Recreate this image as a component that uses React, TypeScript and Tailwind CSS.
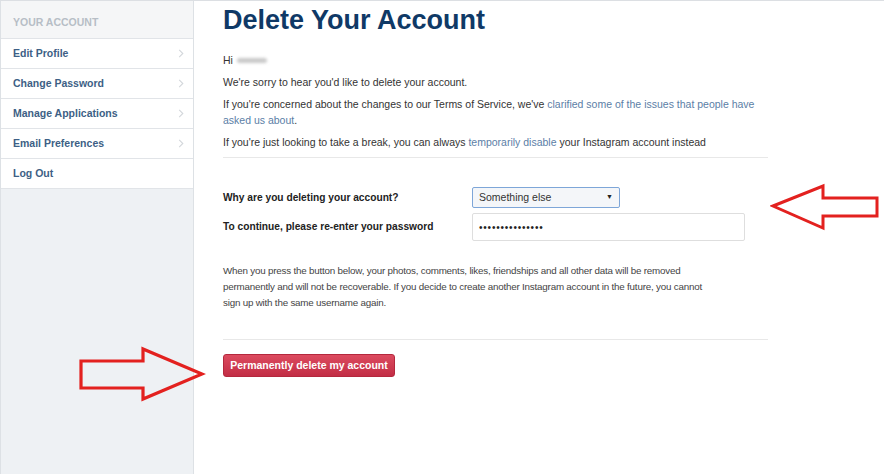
const menu = ["Edit Profile", "Change Password", "Manage Applications", "Email Preferences", "Log Out"];

function Chevron() {
  return (
    <svg viewBox="0 0 6 10" className="h-[9px] w-[6px]" fill="none" aria-hidden="true">
      <path d="M1 1l4 4-4 4" stroke="#d3d7db" strokeWidth="1.2" />
    </svg>
  );
}

function Sidebar() {
  return (
    <aside className="w-[194px] shrink-0 border-l border-r border-[#dde1e5] bg-[#eef1f4]">
      <div className="flex h-[38px] items-center border-b border-[#e1e4e8] bg-[#f5f6f7] px-3 pt-[6px] text-[10.5px] font-bold uppercase text-[#b7bec6]">
        Your Account
      </div>
      {menu.map((item, index) => (
        <div
          key={item}
          className="flex h-[30px] items-center justify-between border-b border-[#e1e4e8] bg-white pl-3 pr-[9px] text-[10.5px] font-bold text-[#3d5f85]"
        >
          <span>{item}</span>
          {index < menu.length - 1 ? <Chevron /> : null}
        </div>
      ))}
    </aside>
  );
}

function LeftArrow() {
  // points left, sits right of the form
  return (
    <svg className="absolute left-[770px] top-[182px]" width="112" height="48" viewBox="0 0 112 48" fill="none">
      <path d="M3 23 L53 3 L53 15 L107 15 L107 33 L53 33 L53 45 Z" stroke="#e3211f" strokeWidth="3" strokeLinejoin="miter" />
    </svg>
  );
}

function RightArrow() {
  // points right, towards the button
  return (
    <svg className="absolute left-[78px] top-[345px]" width="128" height="57" viewBox="0 0 128 57" fill="none">
      <path d="M3 15 L65 15 L65 3 L124 28 L65 53 L65 42 L3 42 Z" stroke="#e3211f" strokeWidth="3.2" strokeLinejoin="miter" />
    </svg>
  );
}

export default function App() {
  return (
    <div
      className="relative flex h-[474px] w-[884px] overflow-hidden border-t border-[#dcdfe3] bg-white"
      style={{ fontFamily: '"Liberation Sans", Arial, sans-serif' }}
    >
      <Sidebar />
      <main className="w-[574px] pl-[29px] text-[10px] text-[#333]">
        <h1 className="mt-[3px] text-[27px] font-bold leading-[32px] text-[#0f3966]">Delete Your Account</h1>

        <div className="mt-[16px] text-[10.5px] leading-4">
          <p className="mb-[6px] flex items-center gap-[4px]">
            Hi
            <span className="inline-block h-[5px] w-[30px] rounded-full bg-[#c9c9c9] blur-[1.5px]" />
          </p>
          <p className="mb-[6px]">We're sorry to hear you'd like to delete your account.</p>
          <p className="mb-[6px]">
            If you're concerned about the changes to our Terms of Service, we've{" "}
            <span className="text-[#5b7ea6]">
              clarified some of the issues that people have
              <br />
              asked us about
            </span>
            .
          </p>
          <p>
            If you're just looking to take a break, you can always{" "}
            <span className="text-[#5b7ea6]">temporarily disable</span> your Instagram account instead
          </p>
        </div>

        <div className="mt-[7px] border-t border-[#e8e8e8]" />

        <div className="mt-[29px] flex flex-col gap-[5px]">
          <div className="flex items-center">
            <label className="w-[249px] text-[10.2px] font-bold text-[#222]">Why are you deleting your account?</label>
            <div className="flex h-[21px] w-[148px] items-center justify-between rounded-[2px] border border-[#7ea6d8] bg-[#f4f6f9] pl-[6px] pr-[6px] text-[10.5px] text-[#333]">
              <span>Something else</span>
              <span className="text-[7px] text-[#222]">▼</span>
            </div>
          </div>
          <div className="flex items-center">
            <label className="w-[249px] text-[10.2px] font-bold text-[#222]">To continue, please re-enter your password</label>
            <div className="flex h-[28px] w-[273px] items-center rounded-[2px] border border-[#dedede] bg-white pl-[6px] text-[10px] tracking-[0.8px] text-[#222]">
              •••••••••••••••
            </div>
          </div>
        </div>

        <p className="mt-[22px] text-[9.8px] leading-4 tracking-[-0.2px] text-[#444]">
          When you press the button below, your photos, comments, likes, friendships and all other data will be removed
          <br />
          permanently and will not be recoverable. If you decide to create another Instagram account in the future, you cannot
          <br />
          sign up with the same username again.
        </p>

        <div className="mt-[28px] border-t border-[#e8e8e8]" />

        <button className="mt-[14px] flex h-[23px] w-[172px] items-center justify-center rounded-[3px] border border-[#b4283d] bg-gradient-to-b from-[#dc4a5f] to-[#c22d45] text-[10.5px] font-bold text-white">
          Permanently delete my account
        </button>
      </main>
      <LeftArrow />
      <RightArrow />
    </div>
  );
}
